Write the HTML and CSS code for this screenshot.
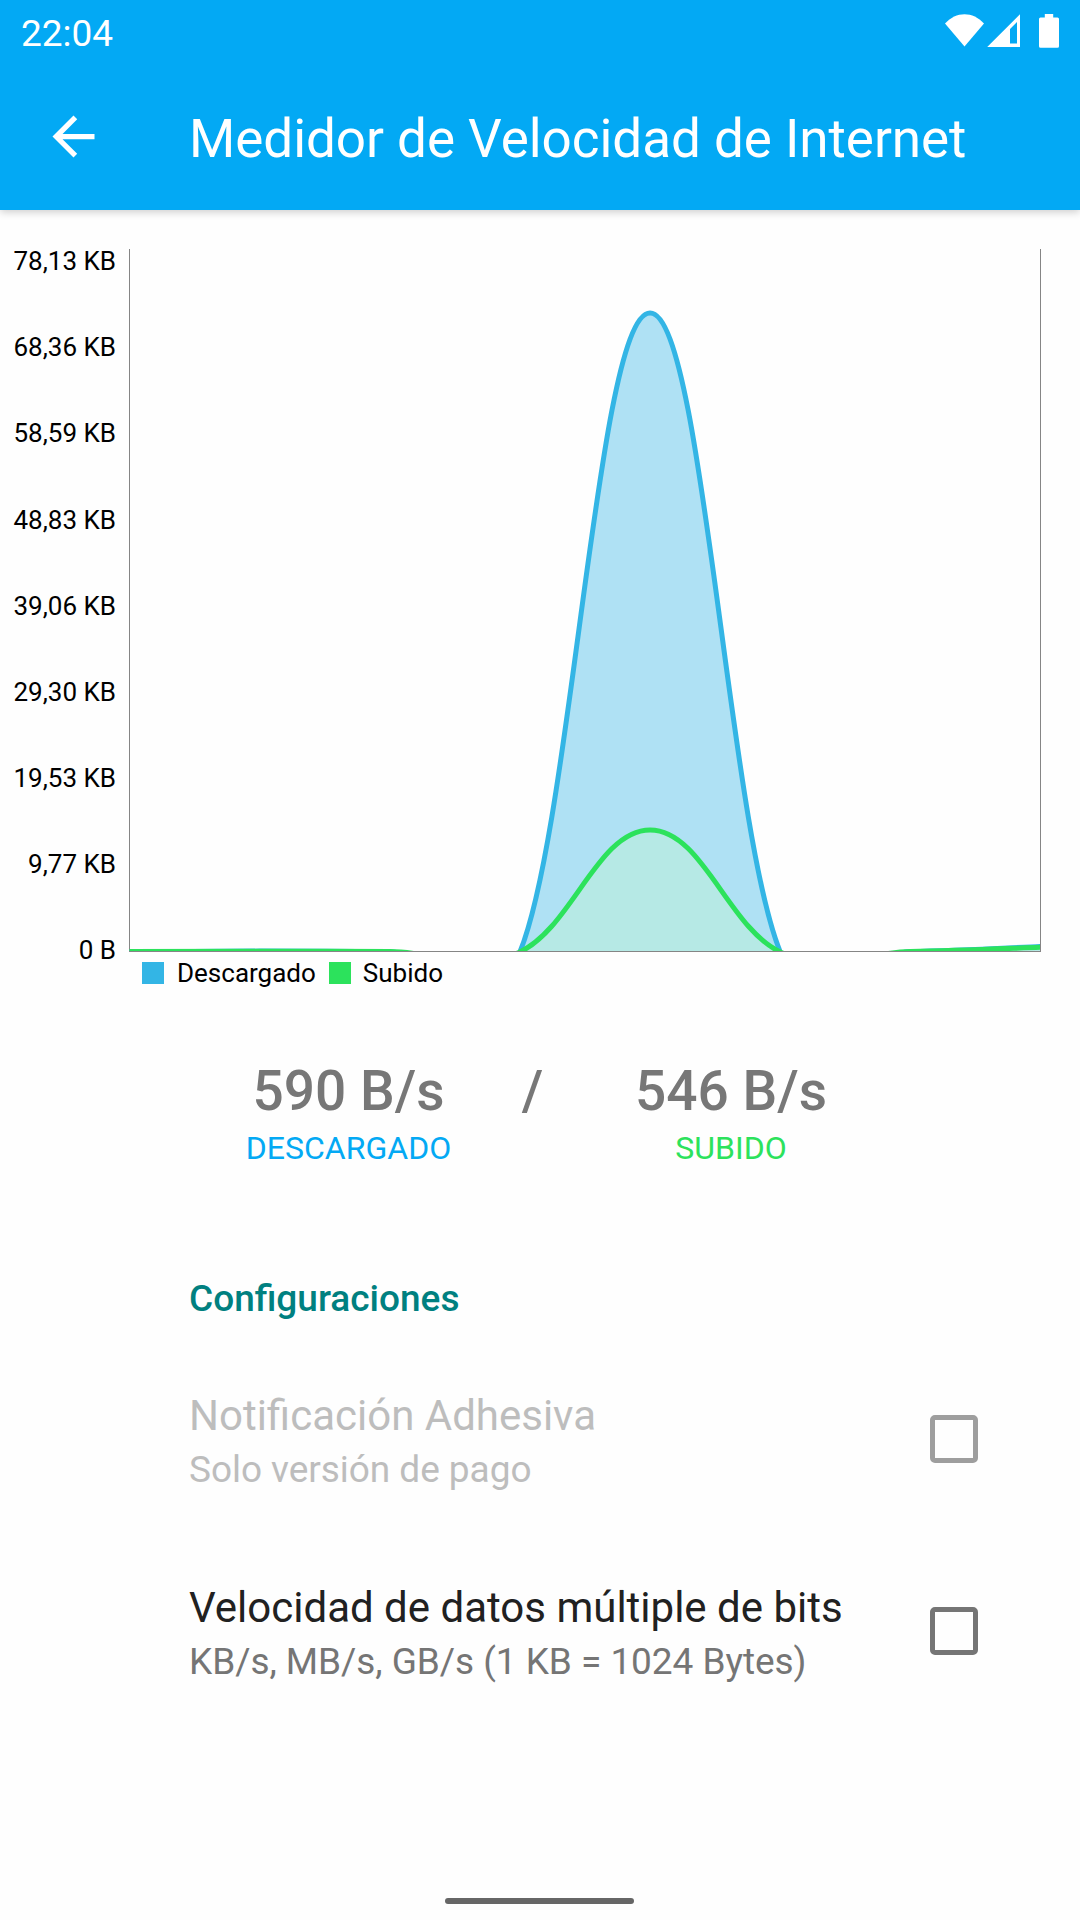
FILE: index.html
```html
<!DOCTYPE html>
<html lang="es">

<head>
  <meta charset="UTF-8" />
  <meta name="viewport" content="width=device-width, initial-scale=1.0" />
  <title>Medidor de Velocidad de Internet</title>
  <link rel="stylesheet" href="styles.css">
</head>

<body>
  <div class="page">
    <div class="header">
      <div class="status-bar">
        <span class="clock">22:04</span>
        <svg class="status-icons" width="116" height="36" viewBox="944 13 116 36">
          <path d="M945 23.5C956 11 973 11 984 23.5L964.5 46.5z" />
          <path fill-rule="evenodd" d="M987.2 47L1020 14.2V47zM1010 43.5H1017V22L1010 29z" />
          <path d="M1044.8 14H1053.2V17.5H1057.5Q1059 17.5 1059 19V46.3Q1059 47.8 1057.5 47.8H1040.5Q1039 47.8 1039 46.3V19Q1039 17.5 1040.5 17.5H1044.8z" />
        </svg>
      </div>
      <div class="app-bar">
        <svg class="back" width="63" height="63" viewBox="0 0 24 24">
          <path d="M20 11H7.83l5.59-5.59L12 4l-8 8 8 8 1.41-1.41L7.83 13H20v-2z" />
        </svg>
        <h1 class="title">Medidor de Velocidad de Internet</h1>
      </div>
    </div>

    <div class="chart">
      <div class="y-labels">
        <span>78,13 KB</span>
        <span>68,36 KB</span>
        <span>58,59 KB</span>
        <span>48,83 KB</span>
        <span>39,06 KB</span>
        <span>29,30 KB</span>
        <span>19,53 KB</span>
        <span>9,77 KB</span>
        <span>0 B</span>
      </div>
      <div class="plot">
        <svg class="curves" width="912" height="703" viewBox="129 249 912 703">
          <defs>
            <clipPath id="area">
              <rect x="129" y="249" width="911" height="702" />
            </clipPath>
          </defs>
          <path class="axis" d="M129.5 249V952M1040.5 249V952M129 951.5H1041" />
          <g id="series" clip-path="url(#area)"></g>
        </svg>
        <div class="legend">
          <span class="swatch down"></span>
          <span class="name">Descargado</span>
          <span class="swatch up"></span>
          <span class="name">Subido</span>
        </div>
      </div>
    </div>

    <div class="speeds">
      <div class="speed">
        <span class="value">590 B/s</span>
        <span class="label down">DESCARGADO</span>
      </div>
      <span class="value">/</span>
      <div class="speed">
        <span class="value">546 B/s</span>
        <span class="label up">SUBIDO</span>
      </div>
    </div>

    <div class="settings">
      <h2 class="category">Configuraciones</h2>
      <div class="item disabled">
        <div class="text">
          <span class="name">Notificación Adhesiva</span>
          <span class="summary">Solo versión de pago</span>
        </div>
        <span class="checkbox"></span>
      </div>
      <div class="item">
        <div class="text">
          <span class="name">Velocidad de datos múltiple de bits</span>
          <span class="summary">KB/s, MB/s, GB/s (1 KB = 1024 Bytes)</span>
        </div>
        <span class="checkbox"></span>
      </div>
    </div>

    <div class="home-bar"></div>
  </div>
  <script>
    (function () {
      const left = 129.5;
      const bottom = 951.9;
      const step = 911 / 7;
      const intensity = 0.2;

      // heights above the x axis
      const series = [
        { name: "down", values: [0, 0.8, 0.2, 0, 638.9, 0, 0.3, 5.4] },
        { name: "up", values: [0.3, 0.7, 0.3, 0, 121.9, 0, 0.3, 4.6] }
      ];

      function getPath(values) {
        const pts = values.map((v, i) => [left + i * step, bottom - v]);
        let d = `M${pts[0]}`;
        for (let i = 1; i < pts.length; i++) {
          const before = pts[i - 2] || pts[i - 1];
          const prev = pts[i - 1];
          const cur = pts[i];
          const next = pts[i + 1] || cur;
          const c1 = prev.map((p, k) => p + (cur[k] - before[k]) * intensity);
          const c2 = cur.map((p, k) => p - (next[k] - prev[k]) * intensity);
          d += `C${c1} ${c2} ${cur}`;
        }
        return d;
      }

      document.getElementById("series").innerHTML = series.map(s => {
        const d = getPath(s.values);
        return `<path class="fill ${s.name}" d="${d}V${bottom}H${left}z" />
          <path class="line ${s.name}" d="${d}" />`;
      }).join("");
    })();
  </script>
</body>

</html>
```
FILE: styles.css
```css
* {
  margin: 0;
  padding: 0;
  box-sizing: border-box;
}

body {
  background-color: #fefefe;
  font-family: Roboto, "Liberation Sans", sans-serif;
}

.page {
  width: 1080px;
  height: 1920px;
  display: flex;
  flex-direction: column;
  overflow: hidden;
}

/**
 * header
 */
.header {
  height: 210px;
  background-color: #03a9f4;
  color: #fff;
  box-shadow: 0 2px 8px rgba(0, 0, 0, 0.2);
}

.status-bar {
  display: flex;
  justify-content: space-between;
  height: 63px;
  padding: 13px 20px 0 21px;
}

.clock {
  font-size: 37px;
  line-height: 41px;
}

.status-icons,
.back {
  fill: #fff;
}

.app-bar {
  display: flex;
  align-items: center;
  height: 147px;
  padding-left: 42px;
}

.title {
  margin-left: 84px;
  padding-top: 5px;
  font-size: 53px;
  font-weight: 400;
  letter-spacing: -0.04px;
}

/**
 * chart
 */
.chart {
  display: flex;
  height: 793px;
  padding-top: 8px;
  font-size: 26px;
  color: #000;
}

.y-labels {
  display: flex;
  flex-direction: column;
  width: 116px;
  padding-top: 0.3px;
  text-align: right;
  line-height: 86.1px;
}

.plot {
  margin-left: 13px;
  padding-top: 31px;
}

.curves {
  display: block;
}

.axis {
  fill: none;
  stroke: #858585;
}

.fill.down {
  fill: rgba(51, 181, 229, 0.39);
}

.fill.up {
  fill: rgba(193, 246, 206, 0.39);
}

.line {
  fill: none;
  stroke-width: 5;
}

.line.down {
  stroke: #33b5e5;
}

.line.up {
  stroke: #2ce25c;
}

.legend {
  display: flex;
  align-items: center;
  height: 41px;
  padding-left: 13px;
}

.legend .swatch {
  width: 22px;
  height: 22px;
}

.legend .swatch.down {
  background-color: #33b5e5;
}

.legend .swatch.up {
  background-color: #2ce25c;
}

.legend .name {
  margin: 1px 13px 0 13px;
}

.legend .swatch.up + .name {
  margin-left: 12px;
}

/**
 * speeds
 */
.speeds {
  display: grid;
  grid-template-columns: 331px 37px 360px;
  height: 170px;
  padding: 56px 0 0 183px;
  text-align: center;
}

.speed {
  display: flex;
  flex-direction: column;
}

.value {
  font-size: 55px;
  font-weight: 500;
  line-height: 64px;
  color: #777;
}

.label {
  font-size: 32px;
  line-height: 38px;
  margin-top: 6px;
}

.label.down {
  color: #03a9f4;
}

.label.up {
  color: #2ce25c;
}

/**
 * settings
 */
.settings {
  padding: 104px 102px 0 189px;
}

.category {
  height: 66px;
  font-size: 37px;
  font-weight: 500;
  line-height: 44px;
  color: #008080;
}

.item {
  display: flex;
  align-items: center;
  justify-content: space-between;
  height: 192px;
}

.text {
  display: flex;
  flex-direction: column;
  padding-top: 8px;
}

.text .name {
  font-size: 42px;
  line-height: 54px;
  color: #212121;
}

.text .summary {
  font-size: 37px;
  line-height: 54px;
  letter-spacing: -0.05px;
  color: #757575;
}

.checkbox {
  width: 48px;
  height: 48px;
  border: 5px solid #757575;
  border-radius: 5px;
}

.item.disabled .name,
.item.disabled .summary {
  color: #bdbdbd;
}

.item.disabled .checkbox {
  border-color: #9e9e9e;
}

.home-bar {
  width: 189px;
  height: 6px;
  margin: auto 0 16px 445px;
  border-radius: 3px;
  background-color: #666;
}
```
